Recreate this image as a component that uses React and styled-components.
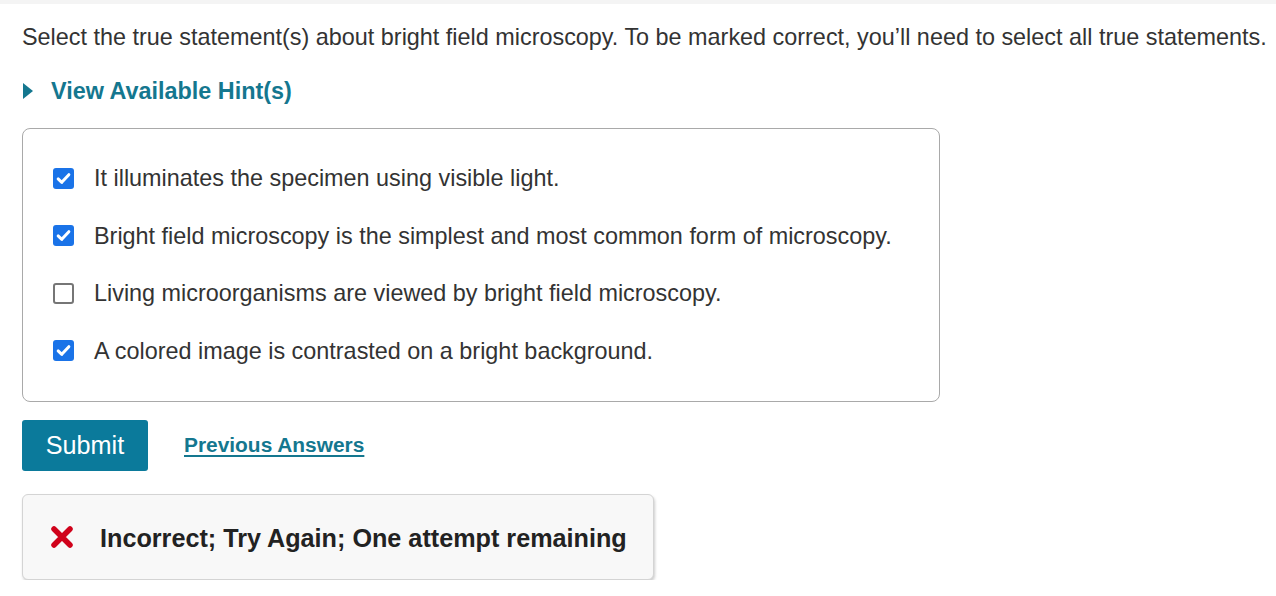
import React from "react";
import styled, { createGlobalStyle } from "styled-components";

const GlobalStyle = createGlobalStyle`
  html, body {
    margin: 0;
    padding: 0;
    background: #fff;
  }
  body {
    font-family: "Liberation Sans", Arial, sans-serif;
    color: #333;
  }
`;

const TopStrip = styled.div`
  height: 4px;
  background-color: #f4f4f4;
`;

const Page = styled.main`
  padding: 18px 0 0 22px;
`;

const Question = styled.p`
  margin: 0;
  font-size: 23.4px;
  line-height: 30px;
  color: #333;
  white-space: nowrap;
`;

const HintToggle = styled.div`
  display: flex;
  align-items: center;
  gap: 18px;
  margin-top: 24px;
  color: #14778f;
  font-size: 23.4px;
  font-weight: bold;
  line-height: 30px;
`;

const Caret = styled.span`
  width: 0;
  height: 0;
  margin-left: 1px;
  border-top: 8px solid transparent;
  border-bottom: 8px solid transparent;
  border-left: 10px solid #14778f;
`;

const ChoicesBox = styled.div`
  width: 918px;
  box-sizing: border-box;
  margin-top: 22px;
  padding: 34px 30px 35px;
  border: 1px solid #a9a9a9;
  border-radius: 8px;
  display: flex;
  flex-direction: column;
  gap: 27.5px;
`;

const Choice = styled.label`
  display: flex;
  align-items: center;
  gap: 20px;
  font-size: 23.4px;
  line-height: 30px;
  color: #333;
`;

const Box = styled.span`
  width: 21px;
  height: 21px;
  box-sizing: border-box;
  border-radius: 3px;
  flex-shrink: 0;
  display: flex;
  align-items: center;
  justify-content: center;
  background-color: ${({ $checked }) => ($checked ? "#1a73e8" : "#fff")};
  border: ${({ $checked }) => ($checked ? "none" : "2px solid #767676")};
`;

const Actions = styled.div`
  display: flex;
  align-items: center;
  gap: 36px;
  margin-top: 18px;
`;

const SubmitButton = styled.button`
  width: 126px;
  height: 51px;
  border: none;
  border-radius: 3px;
  background-color: #0b7a9b;
  color: #fff;
  font-family: "Liberation Sans", Arial, sans-serif;
  font-size: 25.2px;
  cursor: pointer;
`;

const PrevLink = styled.a`
  color: #14778f;
  font-size: 20.9px;
  font-weight: bold;
  text-decoration: underline;
  text-underline-offset: 3px;
  cursor: pointer;
`;

const Feedback = styled.div`
  display: inline-flex;
  align-items: center;
  gap: 26px;
  margin-top: 23px;
  height: 86px;
  padding: 4px 26px 0 27px;
  box-sizing: border-box;
  background-color: #f8f8f8;
  border: 1px solid #d4d4d4;
  border-radius: 6px;
  box-shadow: 1px 2px 3px rgba(0, 0, 0, 0.2);
  font-size: 25.2px;
  font-weight: bold;
  color: #222;
`;

const CrossSvg = styled.svg`
  margin-top: -4px;
  flex-shrink: 0;
`;

function CheckMark() {
  return (
    <svg width="15" height="13" viewBox="0 0 14 12">
      <path
        d="M2 6.4 L5.4 9.6 L12 2.4"
        fill="none"
        stroke="#fff"
        strokeWidth="2.8"
        strokeLinecap="round"
        strokeLinejoin="round"
      />
    </svg>
  );
}

function CrossIcon() {
  return (
    <CrossSvg width="24" height="24" viewBox="0 0 24 24">
      <path
        d="M4 4 L20 20 M20 4 L4 20"
        stroke="#d0021b"
        strokeWidth="5.5"
        strokeLinecap="round"
      />
    </CrossSvg>
  );
}

const choices = [
  { text: "It illuminates the specimen using visible light.", checked: true },
  {
    text: "Bright field microscopy is the simplest and most common form of microscopy.",
    checked: true,
  },
  { text: "Living microorganisms are viewed by bright field microscopy.", checked: false },
  { text: "A colored image is contrasted on a bright background.", checked: true },
];

export default function App() {
  return (
    <>
      <GlobalStyle />
      <TopStrip />
      <Page>
        <Question>
          Select the true statement(s) about bright field microscopy. To be marked correct,
          you’ll need to select all true statements.
        </Question>
        <HintToggle>
          <Caret />
          View Available Hint(s)
        </HintToggle>
        <ChoicesBox>
          {choices.map((c) => (
            <Choice key={c.text}>
              <Box $checked={c.checked}>{c.checked && <CheckMark />}</Box>
              {c.text}
            </Choice>
          ))}
        </ChoicesBox>
        <Actions>
          <SubmitButton>Submit</SubmitButton>
          <PrevLink>Previous Answers</PrevLink>
        </Actions>
        <Feedback>
          <CrossIcon />
          Incorrect; Try Again; One attempt remaining
        </Feedback>
      </Page>
    </>
  );
}
